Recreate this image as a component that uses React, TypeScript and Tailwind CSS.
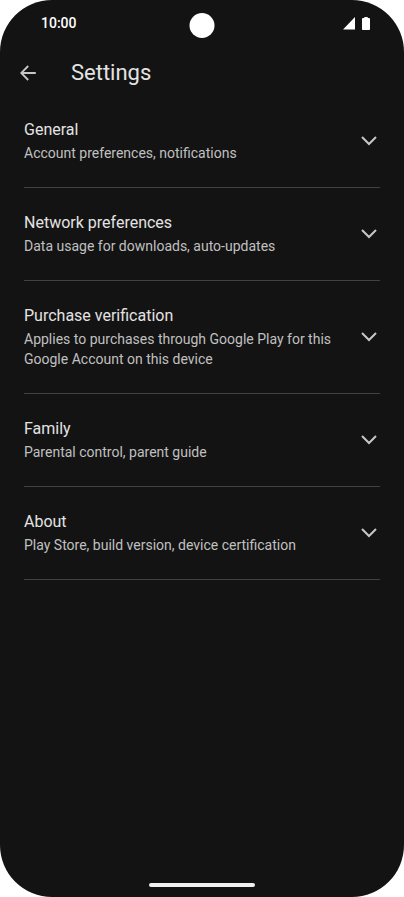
import { useState } from 'react'

interface SettingsSection {
  id: string
  title: string
  summary: string
}

const sections: SettingsSection[] = [
  { id: 'general', title: 'General', summary: 'Account preferences, notifications' },
  { id: 'network', title: 'Network preferences', summary: 'Data usage for downloads, auto-updates' },
  {
    id: 'purchase',
    title: 'Purchase verification',
    summary: 'Applies to purchases through Google Play for this Google Account on this device',
  },
  { id: 'family', title: 'Family', summary: 'Parental control, parent guide' },
  { id: 'about', title: 'About', summary: 'Play Store, build version, device certification' },
]

function StatusBar() {
  return (
    <div className="relative flex h-12 items-start justify-between pt-3 pr-8 pl-[41px] text-white">
      <span className="text-sm/[22px] font-medium">10:00</span>
      {/* Camera cutout */}
      <div className="absolute top-[13px] left-1/2 size-[25px] -translate-x-1/2 rounded-full bg-white" />
      <div className="flex items-center gap-[7px] pt-[5px] pr-[2px]">
        <svg className="h-[13px] w-3" viewBox="0 0 12 13" fill="currentColor" aria-hidden="true">
          <path d="M12 0v12.500H0z" />
        </svg>
        <svg className="h-[13px] w-2" viewBox="0 0 8 13" fill="currentColor" aria-hidden="true">
          <path d="M2.300 0h3.400v1H7a1 1 0 0 1 1 1v10.200a.8.8 0 0 1-.8.8H.8a.8.8 0 0 1-.8-.8V2a1 1 0 0 1 1-1h1.300z" />
        </svg>
      </div>
    </div>
  )
}

function SectionRow({ section }: { section: SettingsSection }) {
  const [open, setOpen] = useState(false)

  return (
    <li className="border-b border-[#414141]">
      <button
        type="button"
        aria-expanded={open}
        onClick={() => setOpen(!open)}
        className="flex w-full items-center justify-between pt-[23px] pr-[3px] pb-6 text-left"
      >
        <span className="flex max-w-[316px] flex-col gap-px">
          <span className="text-base/6 text-[#e3e3e3]">{section.title}</span>
          <span className="text-sm/5 text-[#c0c0c0]">{section.summary}</span>
        </span>
        <svg
          className={open ? 'w-4 shrink-0 rotate-180' : 'w-4 shrink-0'}
          viewBox="0 0 16 10"
          fill="none"
          stroke="#c7c7c7"
          strokeWidth="2"
          aria-hidden="true"
        >
          <path d="M1 1l7 7 7-7" />
        </svg>
      </button>
    </li>
  )
}

export default function App() {
  return (
    <div className="bg-white font-['Roboto',sans-serif]">
      <div className="flex min-h-screen flex-col rounded-[52px] bg-[#131313]">
        <StatusBar />
        <header className="flex h-[46px] items-center pt-1 pl-5">
          <button type="button" aria-label="Back" className="mr-[35px] text-[#c7c7c7]">
            <svg className="size-4" viewBox="0 0 16 16" fill="none" stroke="currentColor" strokeWidth="1.8" aria-hidden="true">
              <path d="M15.800 8H1.500M8.200 1L1.200 8l7 7" />
            </svg>
          </button>
          <h1 className="text-[22px]/7 text-[#e3e3e3]">Settings</h1>
        </header>
        <main className="grow px-6 pt-px">
          <ul>
            {sections.map((section) => (
              <SectionRow key={section.id} section={section} />
            ))}
          </ul>
        </main>
        {/* Gesture bar */}
        <div className="mb-[10px] flex justify-center">
          <div className="h-1 w-[106px] rounded-full bg-[#f1f1f1]" />
        </div>
      </div>
    </div>
  )
}
